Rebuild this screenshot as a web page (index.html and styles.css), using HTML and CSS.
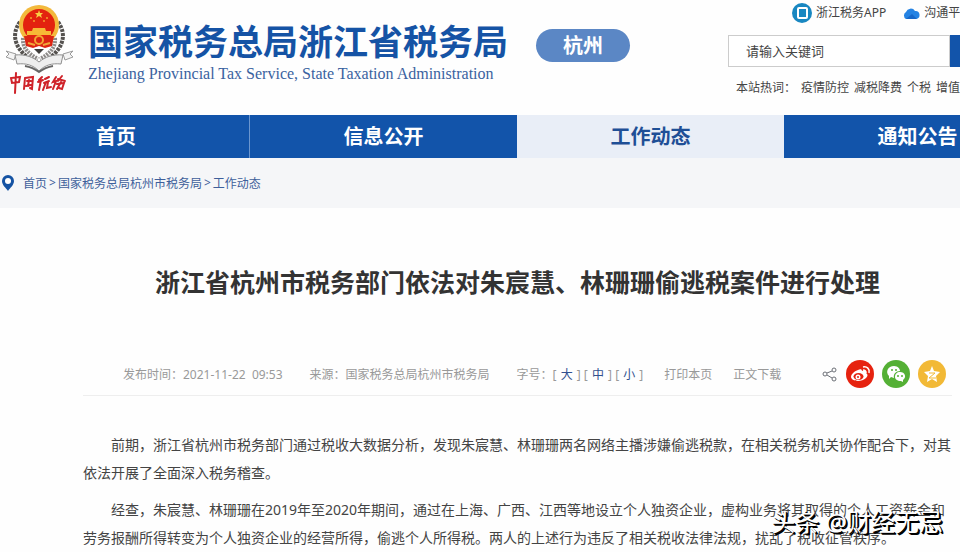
FILE: index.html
```html
<!DOCTYPE html>
<html lang="zh-CN">
<head>
    <meta charset="UTF-8">
    <meta name="viewport" content="width=device-width, initial-scale=1.0">
    <title>国家税务总局浙江省税务局</title>
    <link rel="stylesheet" href="styles.css">
</head>
<body>
<header class="header">
    <svg class="emblem" viewBox="0 0 80 100" aria-hidden="true">
        <g fill="none" stroke="#55524f" stroke-width="4" stroke-dasharray="3 1">
            <path d="M20 22C11 34 13 50 37 64"/>
            <path d="M58 22C67 34 65 50 41 64"/>
        </g>
        <g fill="none" stroke="#8d8a88" stroke-width="4" stroke-dasharray="2 1">
            <path d="M23 38C22 48 29 54 38 59"/>
            <path d="M55 38C56 48 49 54 40 59"/>
        </g>
        <circle cx="39" cy="25" r="20" fill="#f3b93c"/>
        <circle cx="39" cy="25" r="16" fill="#e3220f"/>
        <path d="M24 36h30l-2 10-7 2-6-2-6 2-7-2z" fill="#dc2413"/>
        <path d="M39 10l1 3h3l-2 2 1 3-3-2-3 2 1-3-2-2h3z" fill="#f8cf45"/>
        <g fill="#f5a02c">
            <circle cx="31" cy="18" r="1"/>
            <circle cx="34" cy="21" r="1"/>
            <circle cx="44" cy="21" r="1"/>
            <circle cx="47" cy="18" r="1"/>
        </g>
        <path d="M33 28h12l1 3h5v4H27v-4h5z" fill="#f7b936"/>
        <circle cx="39" cy="40" r="4" fill="none" stroke="#f3a532" stroke-width="2"/>
        <path d="M28 43l7 2M50 43l-7 2" fill="none" stroke="#f0a83a" stroke-width="2"/>
        <path d="M34 49h10l-5 5z" fill="#3f3c3a"/>
        <path d="M6 51l10 3-2 6-8-3 3-3zM73 51l-10 3 2 6 8-3-3-3z" fill="#f4f4f4" stroke="#9c9c9c"/>
        <path d="M15 55c10-1 18 2 24 7 6-5 14-8 24-7l-2 9c-9-1-16 1-22 7-6-6-13-8-22-7z" fill="#eeeeee" stroke="#8f8f8f"/>
        <path d="M25 66c6 1 10 3 14 6 4-3 8-5 14-6" fill="none" stroke="#666" stroke-width="2"/>
        <g fill="none" stroke="#cf2229" stroke-width="2" stroke-linecap="round">
            <path d="M11 78l1 5 7-1 1-5zM16 73l-1 20"/>
            <path d="M25 78l-1 11M25 78l8-1-1 12-2-1M27 81h4M29 80l-1 6M26 86l5-1"/>
            <path d="M42 77l-3 3M38 82l5-2M41 80l-2 10M45 79l4-2M44 83l5-2M46 82l-3 8M48 82l-1 6 4-1"/>
            <path d="M56 77l-3 5 3-1-3 8M62 76l-4 5M58 79l7 2M57 84l7-1-2 6-3-1M61 82l-4 7"/>
        </g>
    </svg>
    <div class="site-name">
        <h1>国家税务总局浙江省税务局</h1>
        <p>Zhejiang Provincial Tax Service, State Taxation Administration</p>
    </div>
    <a class="city" href="#">杭州</a>
    <div class="tools">
        <div class="apps">
            <a href="#">
                <svg width="20" height="20" viewBox="0 0 20 20" aria-hidden="true">
                    <circle cx="10" cy="10" r="10" fill="#1987c1"/>
                    <rect x="6" y="5" width="9" height="10" rx="1" fill="none" stroke="#fff" stroke-width="2"/>
                </svg>
                浙江税务APP
            </a>
            <a href="#">
                <svg width="18" height="12" viewBox="0 0 18 12" aria-hidden="true">
                    <path d="M4 12a4 4 0 0 1 0-7 5 5 0 0 1 9-1 4 4 0 0 1 1 8z" fill="#2583e3"/>
                    <path d="M4 12l6-5 5 5z" fill="#1667c9"/>
                </svg>
                沟通平台
            </a>
        </div>
        <form class="search">
            <input type="text" placeholder="请输入关键词" aria-label="请输入关键词">
            <button type="submit" aria-label="搜索"></button>
        </form>
        <div class="hot">
            <span>本站热词：</span>
            <a href="#">疫情防控</a>
            <a href="#">减税降费</a>
            <a href="#">个税</a>
            <a href="#">增值税</a>
        </div>
    </div>
</header>

<nav class="nav">
    <a href="#">首页</a>
    <a href="#">信息公开</a>
    <a href="#" class="active">工作动态</a>
    <a href="#">通知公告</a>
</nav>

<div class="crumbs">
    <svg width="14" height="16" viewBox="0 0 14 16" aria-hidden="true">
        <path d="M7 0a6 6 0 0 1 6 6c0 4-4 7-6 10C5 13 1 10 1 6a6 6 0 0 1 6-6z" fill="#1553a3"/>
        <circle cx="7" cy="6" r="3" fill="#fff"/>
    </svg>
    <p><a href="#">首页</a>&gt;<a href="#">国家税务总局杭州市税务局</a>&gt;<a href="#">工作动态</a></p>
</div>

<main class="article">
    <h2>浙江省杭州市税务部门依法对朱宸慧、林珊珊偷逃税案件进行处理</h2>
    <div class="meta">
        <span class="info">发布时间：2021-11-22&nbsp; 09:53</span>
        <span class="info">来源：国家税务总局杭州市税务局</span>
        <span class="size">字号：[ <a href="#">大</a> ] [ <a href="#">中</a> ] [ <a href="#">小</a> ]</span>
        <a href="#">打印本页</a>
        <a href="#">正文下载</a>
        <div class="share">
            <svg width="16" height="16" viewBox="0 0 16 16" fill="none" stroke="#6b6f76" aria-hidden="true">
                <circle cx="3" cy="8" r="2"/>
                <circle cx="12" cy="4" r="2"/>
                <circle cx="12" cy="13" r="2"/>
                <path d="M5 7l5-2M5 9l5 3"/>
            </svg>
            <a href="#" aria-label="微博">
                <svg width="28" height="28" viewBox="0 0 28 28" aria-hidden="true">
                    <circle cx="14" cy="14" r="14" fill="#e6220f"/>
                    <path d="M12 10c2-1 4-1 4 1 3-1 5 0 4 2 2 1 2 3 0 5-4 4-14 4-15-1 0-3 4-6 7-7z" fill="#fff"/>
                    <ellipse cx="12.500" cy="16.500" rx="5" ry="3.500" fill="#e6220f"/>
                    <circle cx="12" cy="17" r="2.500" fill="#fff"/>
                    <circle cx="12" cy="17" r="1" fill="#e6220f"/>
                    <path d="M17 7c4-1 7 2 6 6M17 10c2 0 3 1 3 3" fill="none" stroke="#fff" stroke-width="1.500"/>
                </svg>
            </a>
            <a href="#" aria-label="微信">
                <svg width="28" height="28" viewBox="0 0 28 28" aria-hidden="true">
                    <circle cx="14" cy="14" r="14" fill="#54b035"/>
                    <path d="M12 6c4 0 6 3 6 5-4 0-7 3-6 7l-3-1-2 2v-3c-4-4-1-10 5-10z" fill="#fff"/>
                    <path d="M18 12c5 0 7 5 3 8v2l-2-1c-4 0-6-2-6-4 0-3 2-5 5-5z" fill="#fff"/>
                    <g fill="#54b035">
                        <circle cx="10" cy="10" r="1"/>
                        <circle cx="14" cy="10" r="1"/>
                        <circle cx="16" cy="16" r="1"/>
                        <circle cx="20" cy="16" r="1"/>
                    </g>
                </svg>
            </a>
            <a href="#" aria-label="QQ空间">
                <svg width="28" height="28" viewBox="0 0 28 28" aria-hidden="true">
                    <circle cx="14" cy="14" r="14" fill="#f2b936"/>
                    <path d="M14 6l2 5 6 1-4 4 1 6-5-3-5 3 1-6-4-4 6-1z" fill="#fff"/>
                    <path d="M11 13h6l-6 5h7" fill="none" stroke="#f2b936"/>
                </svg>
            </a>
        </div>
    </div>
    <div class="content">
        <p>前期，浙江省杭州市税务部门通过税收大数据分析，发现朱宸慧、林珊珊两名网络主播涉嫌偷逃税款，在相关税务机关协作配合下，对其依法开展了全面深入税务稽查。</p>
        <p>经查，朱宸慧、林珊珊在2019年至2020年期间，通过在上海、广西、江西等地设立个人独资企业，虚构业务将其取得的个人工资薪金和劳务报酬所得转变为个人独资企业的经营所得，偷逃个人所得税。两人的上述行为违反了相关税收法律法规，扰乱了税收征管秩序。</p>
    </div>
</main>
<div class="watermark">头条 @财经无忌</div>
</body>
</html>
```
FILE: styles.css
```css
* {
    margin: 0;
    padding: 0;
    box-sizing: border-box;
}

body {
    position: relative;
    font-family: "Noto Sans", "Noto Sans CJK SC", sans-serif;
    font-size: 12px;
    color: #444;
    background: #fefefe;
    overflow-x: hidden;
}

a {
    color: inherit;
    text-decoration: none;
}

svg {
    display: block;
    flex-shrink: 0;
}

.header {
    display: flex;
    align-items: flex-start;
    height: 115px;
    overflow: hidden;
}

.emblem {
    width: 80px;
    height: 100px;
}

.site-name {
    flex-shrink: 0;
    margin: 22px 0 0 8px;
    color: #1553a5;
    white-space: nowrap;
}

.site-name h1 {
    font-size: 35px;
    line-height: 40px;
}

.site-name p {
    font-family: "Liberation Serif", serif;
    font-size: 16px;
    line-height: 24px;
    color: #3a62a0;
}

.city {
    flex-shrink: 0;
    width: 94px;
    margin: 29px 0 0 28px;
    border-radius: 17px;
    background: #5b87c5;
    color: #fff;
    font-size: 20px;
    font-weight: bold;
    line-height: 33px;
    text-align: center;
}

.tools {
    width: 232px;
    margin-left: auto;
    white-space: nowrap;
}

.apps {
    display: flex;
    gap: 16px;
    padding: 3px 0 0 64px;
}

.apps a {
    display: flex;
    flex-shrink: 0;
    align-items: center;
    gap: 4px;
    line-height: 20px;
}

.search {
    display: flex;
    height: 32px;
    margin-top: 12px;
}

.search input {
    flex: 1;
    min-width: 0;
    padding: 0 17px;
    border: 1px solid #ccc;
    background: #fff;
    font-family: inherit;
    font-size: 13px;
}

.search input::placeholder {
    color: #444;
}

.search button {
    width: 10px;
    border: none;
    background: #1254aa;
    cursor: pointer;
}

.hot {
    display: flex;
    gap: 5px;
    padding: 11px 0 0 8px;
    line-height: 20px;
}

.nav {
    display: flex;
    margin-left: -17px;
    background: #1254aa;
    overflow: hidden;
}

.nav a {
    flex: 0 0 267px;
    color: #fff;
    font-size: 20px;
    font-weight: bold;
    line-height: 43px;
    text-align: center;
}

.nav a:first-child {
    border-right: 1px solid #6b96cf;
}

.nav .active {
    background: #e9eef7;
    color: #1f4f96;
}

.crumbs {
    display: flex;
    align-items: center;
    gap: 8px;
    height: 50px;
    padding-left: 1px;
    background: #f5f6f8;
    color: #3e5f9b;
}

.crumbs p {
    display: flex;
    gap: 2px;
}

.article {
    padding: 57px 8px 0 83px;
}

.article h2 {
    font-size: 25px;
    line-height: 34px;
    color: #333;
    text-align: center;
    white-space: nowrap;
}

.meta {
    display: flex;
    align-items: center;
    gap: 21px;
    height: 44px;
    margin-top: 53px;
    padding: 0 6px 0 40px;
    border-bottom: 1px solid #eee;
    color: #999;
    white-space: nowrap;
}

.info {
    padding-right: 6px;
}

.size a {
    padding: 0 1px;
    color: #31508f;
}

.share {
    display: flex;
    align-items: center;
    gap: 8px;
    margin-left: auto;
}

.content {
    padding-top: 35px;
    font-size: 14px;
    line-height: 28px;
}

.content p {
    margin-bottom: 9px;
    text-indent: 28px;
}

.watermark {
    position: absolute;
    right: 17px;
    bottom: 21px;
    color: #fff;
    font-size: 24px;
    line-height: 36px;
    text-shadow: 1px 1px 0 #000, 2px 2px 0 #000;
}
```
